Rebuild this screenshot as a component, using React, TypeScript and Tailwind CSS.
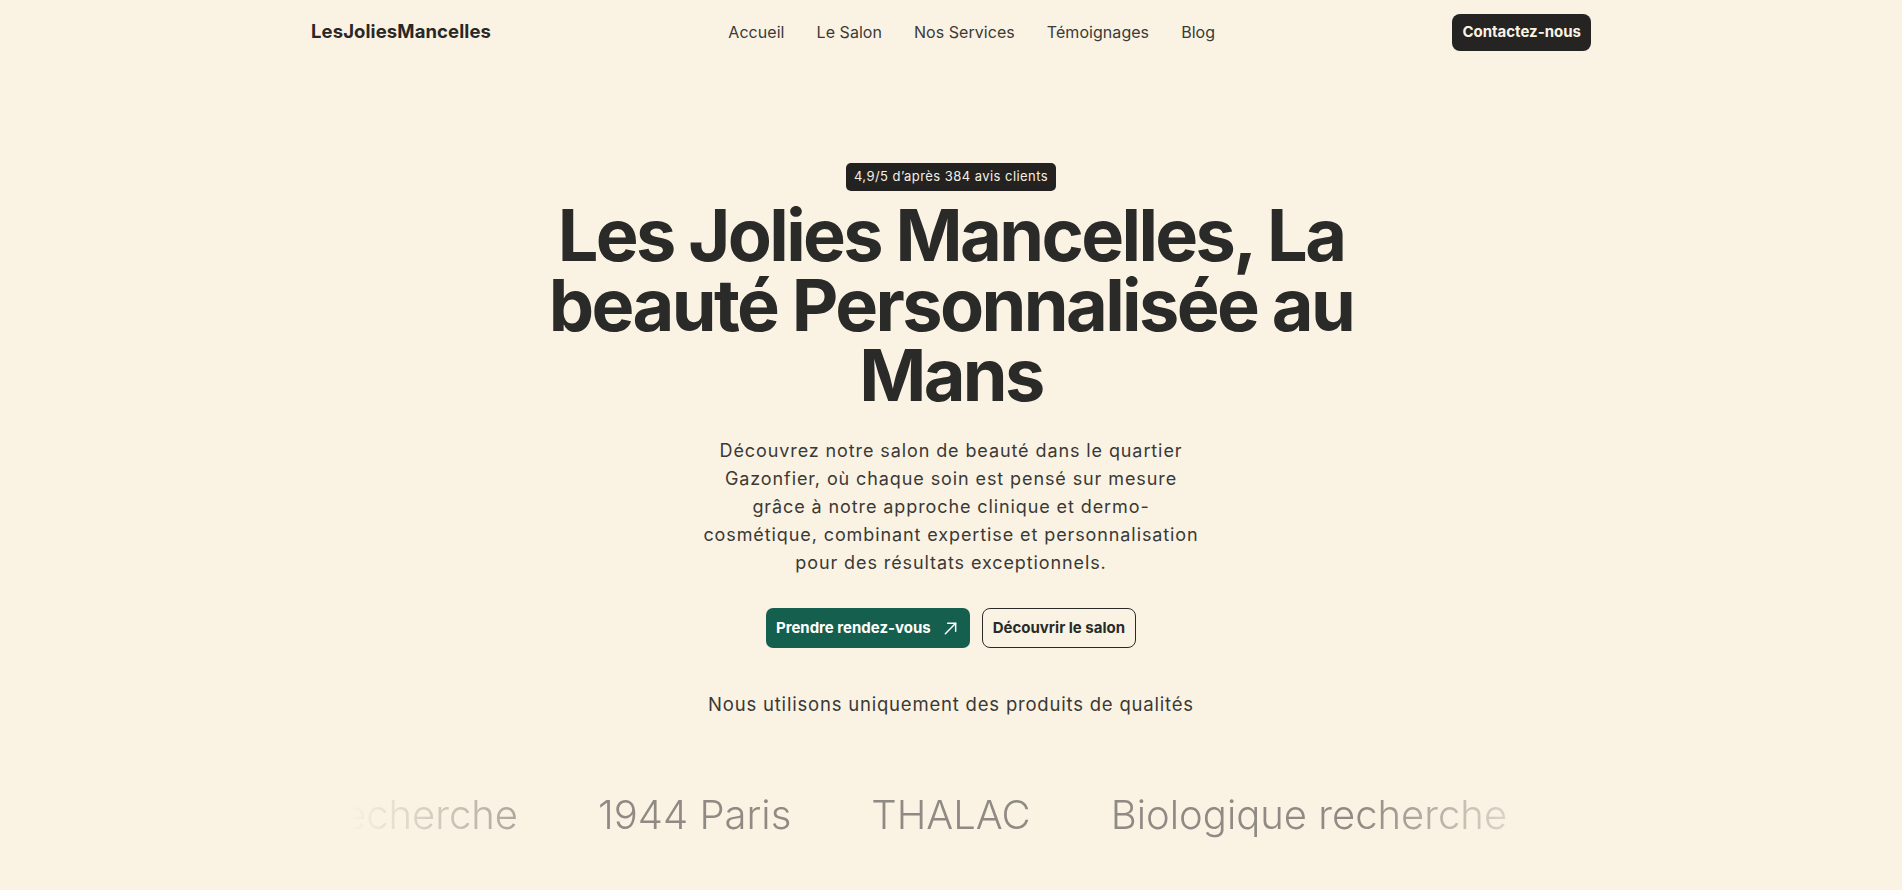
import React from "react";

const navLinks = ["Accueil", "Le Salon", "Nos Services", "Témoignages", "Blog"];
const brands = ["Biologique recherche", "1944 Paris", "THALAC", "Biologique recherche", "1944 Paris"];

const ArrowIcon = () => (
  <svg width="15" height="15" viewBox="0 0 16 16" fill="none" stroke="currentColor" strokeWidth="1.6" strokeLinecap="round" strokeLinejoin="round">
    <path d="M2.5 13.5 13.5 2.5" />
    <path d="M5 2.5h8.5V11" />
  </svg>
);

const App: React.FC = () => {
  return (
    <div className="min-h-screen bg-[#faf3e4] text-[#2a2a28] font-['Inter',sans-serif] overflow-hidden">
      {/* header */}
      <header className="mx-auto max-w-[1280px] h-16 flex items-center justify-between">
        <a className="text-[18.5px] font-bold tracking-[0.1px] text-[#2a2826]">LesJoliesMancelles</a>
        <nav className="flex gap-[32px] text-[16px] tracking-[0.05px] text-[#3b3a37] whitespace-nowrap">
          {navLinks.map((l) => (
            <a key={l}>{l}</a>
          ))}
        </nav>
        <button className="h-[37px] px-[10px] rounded-[8px] bg-[#252422] text-[#faf3e4] text-[15px] font-bold">
          Contactez-nous
        </button>
      </header>

      {/* hero */}
      <section className="flex flex-col items-center text-center pt-[99px]">
        <span className="h-[28px] px-[8px] flex items-center rounded-[5px] bg-[#232220] text-[#f6efe2] text-[13px] tracking-[0.45px]">
          4,9/5 d’après 384 avis clients
        </span>
        <h1 className="mt-[9px] max-w-[880px] text-[72px] leading-[70px] font-bold tracking-[-2.6px]">
          Les Jolies Mancelles, La beauté Personnalisée au Mans
        </h1>
        <p className="mt-[27px] text-[18px] leading-[28px] tracking-[0.9px] text-[#3a3936]">
          Découvrez notre salon de beauté dans le quartier
          <br />
          Gazonfier, où chaque soin est pensé sur mesure
          <br />
          grâce à notre approche clinique et dermo-
          <br />
          cosmétique, combinant expertise et personnalisation
          <br />
          pour des résultats exceptionnels.
        </p>
        <div className="mt-[31px] flex gap-[12px]">
          <button className="h-[40px] pl-[10px] pr-[12px] flex items-center gap-[12px] rounded-[7px] bg-[#155f4e] text-white text-[15px] font-bold">
            Prendre rendez-vous
            <ArrowIcon />
          </button>
          <button className="h-[40px] px-[10px] rounded-[8px] border border-[#2a2a28] text-[15px] font-bold">
            Découvrir le salon
          </button>
        </div>
        <p className="mt-[43px] text-[18.5px] tracking-[0.8px] text-[#3a3936]">Nous utilisons uniquement des produits de qualités</p>
      </section>

      {/* brands */}
      <div className="mx-auto mt-[66px] max-w-[1280px] flex justify-center gap-[80px] overflow-hidden [mask-image:linear-gradient(to_right,transparent_3%,black_21%,black_82%,transparent_98%)]">
        {brands.map((b, i) => (
          <span key={i} className="shrink-0 whitespace-nowrap text-[40px] font-light text-[#8f8a83]">
            {b}
          </span>
        ))}
      </div>
    </div>
  );
};

export default App;
